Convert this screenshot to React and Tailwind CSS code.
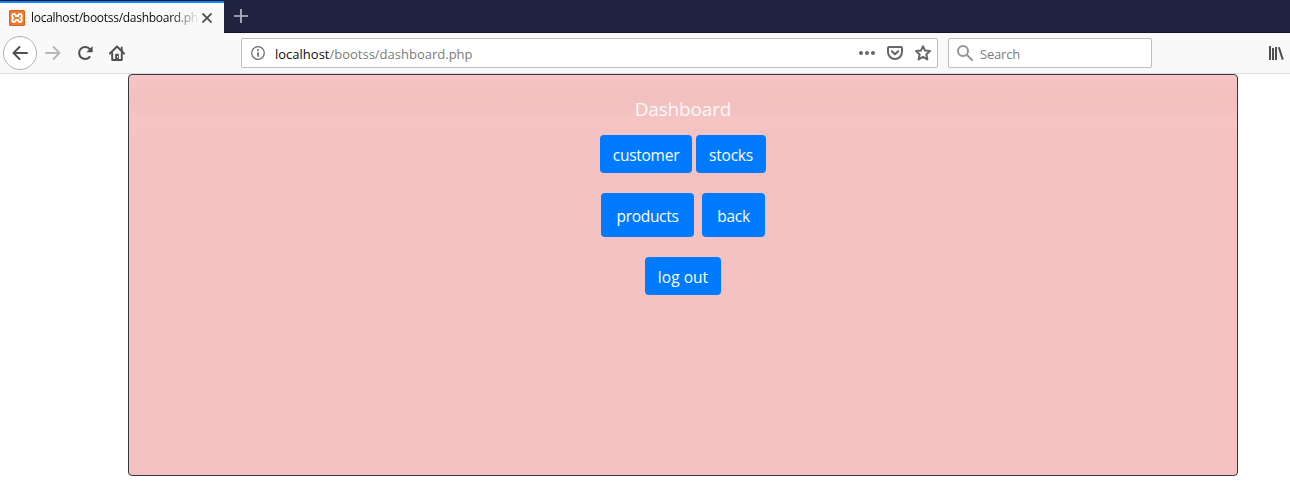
import React from "react";

function TabBar() {
  return (
    <div className="flex h-[33px] border-b border-[#12142e] bg-[#202340]">
      <div className="flex h-[33px] w-[224px] shrink-0 flex-col bg-[#f9f9fa]">
        <div className="h-px bg-[#12142e]" />
        <div className="h-[2px] bg-[#0a84ff]" />
        <div className="flex h-[29px] items-center pl-[9px]">
          <svg className="h-4 w-4 shrink-0" viewBox="0 0 16 16">
            <rect width="16" height="16" rx="1.5" fill="#d9651c" />
            <rect x="1" y="1" width="14" height="14" rx="1" fill="#f07a2b" />
            <path
              d="M5 4c1.600 0 1.800 1.200 1.800 2.200h2.400C9.200 5.200 9.400 4 11 4c2.200 0 2.600 2.800.6 4 2 1.200 1.600 4-.6 4-1.600 0-1.800-1.200-1.800-2.200H6.800C6.800 10.800 6.600 12 5 12c-2.200 0-2.600-2.800-.6-4-2-1.200-1.600-4 .6-4Z"
              fill="none"
              stroke="#fff"
              strokeWidth="1.800"
              strokeLinejoin="round"
            />
          </svg>
          <div className="ml-[6px] w-[166px] overflow-hidden whitespace-nowrap text-[12px] leading-4 tracking-[-0.280px] text-[#0c0c0d] [mask-image:linear-gradient(to_right,black_140px,transparent_168px)]">
            localhost/bootss/dashboard.php
          </div>
          <svg className="ml-[5px] h-[10px] w-[10px] shrink-0" viewBox="0 0 10 10">
            <path d="M.5.5l9 9M9.500.5l-9 9" stroke="#4a4a4c" strokeWidth="1.700" />
          </svg>
        </div>
      </div>
      <svg className="ml-[10px] mt-[9px] h-[14px] w-[14px]" viewBox="0 0 14 14">
        <path d="M7 0v14M0 7h14" stroke="#b9bac5" strokeWidth="1.700" />
      </svg>
    </div>
  );
}

function Toolbar() {
  return (
    <div className="flex h-[41px] items-center border-b border-[#dcdcdd] bg-[#f9f9fa] text-[13px] text-[#7b7b7b]">
      <div className="ml-[3px] flex h-[34px] w-[34px] shrink-0 items-center justify-center rounded-full border border-[#b1b1b3] bg-white">
        <svg className="h-4 w-4" viewBox="0 0 16 16" fill="none" stroke="#505052" strokeWidth="2" strokeLinecap="round" strokeLinejoin="round">
          <path d="M15 8H1.500M7.500 2l-6 6 6 6" />
        </svg>
      </div>
      <svg className="ml-2 h-4 w-4 shrink-0" viewBox="0 0 16 16" fill="none" stroke="#b8b8b9" strokeWidth="2" strokeLinecap="round" strokeLinejoin="round">
        <path d="M1 8h13.500M8.500 2l6 6-6 6" />
      </svg>
      <svg className="ml-4 h-4 w-4 shrink-0" viewBox="0 0 16 16">
        <path d="M12.800 4.200A6 6 0 1 0 12.600 12" fill="none" stroke="#505052" strokeWidth="2" strokeLinecap="round" />
        <path d="M15.600 1v6.200H9.400Z" fill="#505052" />
      </svg>
      <svg className="ml-4 h-4 w-4 shrink-0" viewBox="0 0 16 16" fill="none" stroke="#505052" strokeWidth="2" strokeLinecap="round" strokeLinejoin="round">
        <path d="M1 8.500L8 1.500l7 7" />
        <path d="M3.200 8v7h9.600V8M12.700 2.500v3" strokeWidth="1.900" />
        <path d="M8 8.800V14.500" strokeWidth="3.600" strokeLinecap="butt" />
        <path d="M8.500 11v1.500" stroke="#f9f9fa" strokeWidth="1" strokeLinecap="butt" />
      </svg>
      <div className="ml-[116px] flex h-[30px] w-[697px] shrink-0 items-center rounded-[2px] border border-[#bebebf] bg-white">
        <svg className="ml-[9px] h-[14px] w-[14px] shrink-0" viewBox="0 0 14 14">
          <circle cx="7" cy="7" r="6.300" fill="none" stroke="#6c6c6d" strokeWidth="1.200" />
          <path d="M7 6.200v4.500M7 3.200v1.700" stroke="#6c6c6d" strokeWidth="1.700" />
        </svg>
        <div className="ml-[10px] mt-[2px] w-[198px] whitespace-nowrap leading-4">
          <span className="text-[#0c0c0d]">localhost</span>/bootss/dashboard.php
        </div>
        <svg className="ml-auto h-4 w-4 shrink-0" viewBox="0 0 16 16" fill="#666667">
          <circle cx="2" cy="8" r="2" />
          <circle cx="8" cy="8" r="2" />
          <circle cx="14" cy="8" r="2" />
        </svg>
        <svg className="ml-3 h-4 w-4 shrink-0" viewBox="0 0 16 16" fill="none" stroke="#666667" strokeWidth="2" strokeLinecap="round" strokeLinejoin="round">
          <path d="M2 2h12a1 1 0 0 1 1 1v4A7 7 0 0 1 1 7V3a1 1 0 0 1 1-1ZM4.800 6.200L8 9.300l3.200-3.100" />
        </svg>
        <svg className="ml-3 mr-[6px] h-4 w-4 shrink-0" viewBox="0 0 16 16" fill="none" stroke="#666667" strokeWidth="2" strokeLinejoin="round">
          <path d="M8 1.200l2.050 4.400 4.900.5-3.600 3.300 1 5L8 11.900l-4.350 2.500 1-5-3.600-3.300 4.900-.5Z" />
        </svg>
      </div>
      <div className="ml-[10px] flex h-[30px] w-[204px] shrink-0 items-center rounded-[2px] border border-[#bebebf] bg-white">
        <svg className="ml-[8px] h-4 w-4 shrink-0" viewBox="0 0 16 16" fill="none" stroke="#969697" strokeWidth="2" strokeLinecap="round">
          <circle cx="6" cy="6" r="5" />
          <path d="M9.800 9.800L15 15" />
        </svg>
        <span className="ml-[7px] mt-[2px] leading-4 tracking-[-0.200px]">Search</span>
      </div>
      <svg className="ml-[116px] h-4 w-4 shrink-0" viewBox="0 0 16 16" fill="none" stroke="#505052" strokeWidth="2">
        <path d="M2 1v14M5 3v12M8 2v13M10.800 2.300l4 12.300" />
      </svg>
    </div>
  );
}

function Button({ className, children }) {
  return (
    <button className={"flex items-center justify-center whitespace-nowrap rounded-[4px] bg-[#007bff] pt-px text-[15.5px] leading-6 text-white " + className}>
      {children}
    </button>
  );
}

export default function App() {
  return (
    <div className="h-[500px] w-[1290px] overflow-hidden bg-white font-['Open_Sans','Noto_Sans',sans-serif]">
      <TabBar />
      <Toolbar />
      <main className="ml-[128px] flex h-[402px] w-[1110px] flex-col items-center rounded-[4px] border border-[#343a40] bg-[#f4c2c2] bg-[linear-gradient(#f7c5c8_0px,#f5c2c3_12px,#f2c0bd_20px,#f3c1bf_34px,#f5c4c3_44px,#f5c3c3_54px,#f4c2c2_62px)]">
        <h1 className="mt-[22px] whitespace-nowrap text-[19px] leading-6 tracking-[-0.150px] text-[#f8f9fa]">Dashboard</h1>
        <div className="mt-[14px] flex gap-1">
          <Button className="h-[38px] w-[92px] tracking-[-0.260px]">customer</Button>
          <Button className="h-[38px] w-[70px] tracking-[-0.200px]">stocks</Button>
        </div>
        <div className="mt-5 flex gap-2">
          <Button className="h-[44px] w-[93px] tracking-[-0.300px]">products</Button>
          <Button className="h-[44px] w-[63px] tracking-[-0.300px]">back</Button>
        </div>
        <Button className="mt-5 h-[38px] w-[76px] tracking-[0.050px]">log out</Button>
      </main>
    </div>
  );
}
